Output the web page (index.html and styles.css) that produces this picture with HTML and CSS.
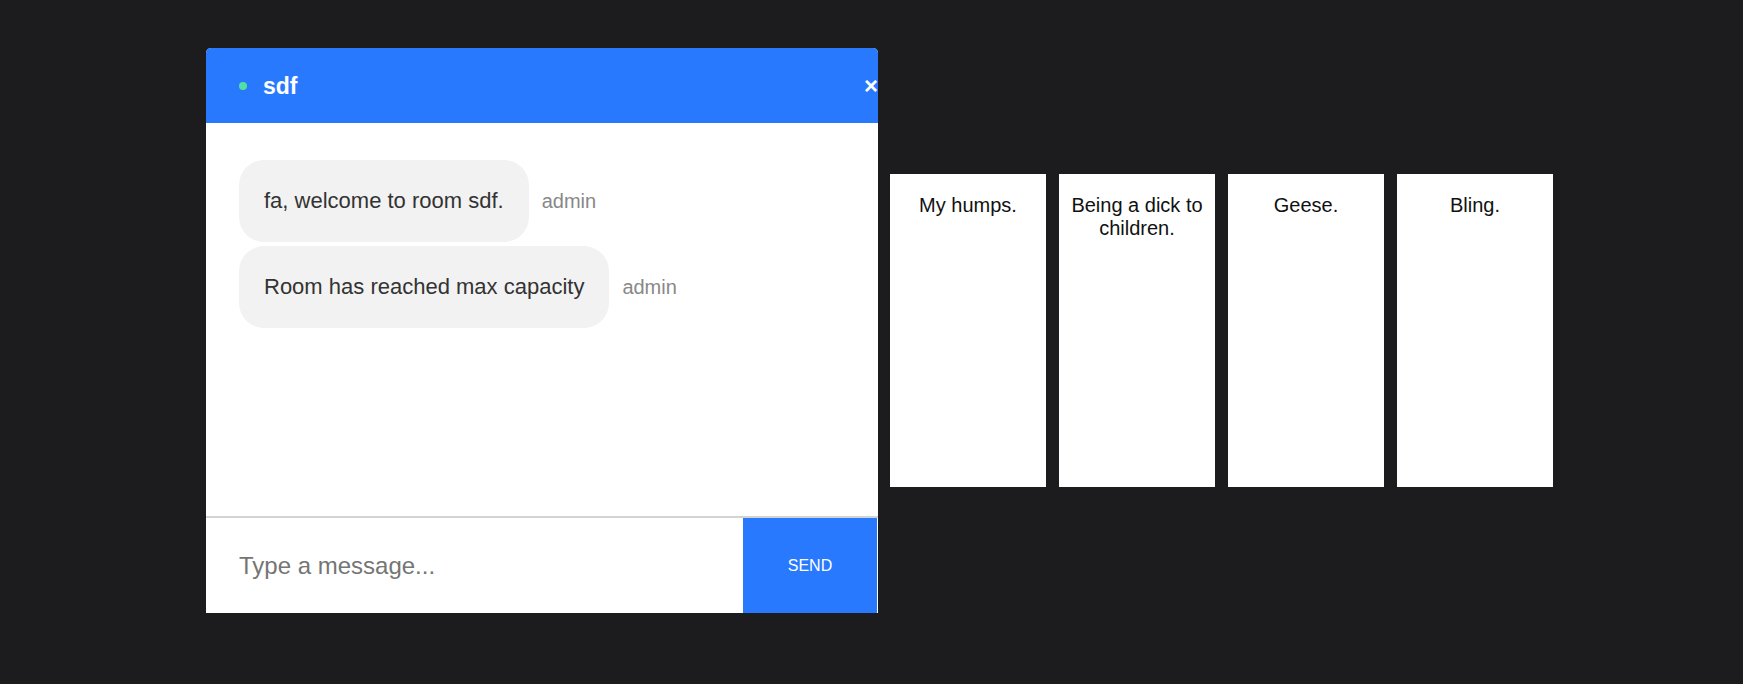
FILE: index.html
```html
<!DOCTYPE html>
<html lang="en">
<head>
<meta charset="utf-8">
<title>Chat room</title>
<link rel="stylesheet" href="styles.css">
</head>
<body>
<div class="stage">
  <section class="chat">
    <header class="chat-header">
      <span class="dot"></span>
      <span class="title">sdf</span>
      <span class="close">&times;</span>
    </header>
    <div class="messages">
      <div class="msg">
        <div class="bubble">fa, welcome to room sdf.</div>
        <span class="sender">admin</span>
      </div>
      <div class="msg">
        <div class="bubble">Room has reached max capacity</div>
        <span class="sender">admin</span>
      </div>
    </div>
    <form class="composer">
      <input class="composer-input" type="text" placeholder="Type a message...">
      <button class="send" type="button">Send</button>
    </form>
  </section>
  <div class="cards">
    <div class="card">My humps.</div>
    <div class="card">Being a dick to children.</div>
    <div class="card">Geese.</div>
    <div class="card">Bling.</div>
  </div>
</div>
</body>
</html>
```
FILE: styles.css
```css
* {
  box-sizing: border-box;
}

html, body {
  margin: 0;
  padding: 0;
}

body {
  background: #1c1c1e;
  font-family: "Liberation Sans", Arial, sans-serif;
  width: 1743px;
  height: 684px;
  overflow: hidden;
}

.stage {
  display: flex;
  align-items: center;
  gap: 12px;
  padding: 48px 0 0 206px;
}

.chat {
  width: 672px;
  height: 565px;
  background: #ffffff;
  border-radius: 5px 5px 0 0;
  overflow: hidden;
  display: flex;
  flex-direction: column;
  flex: none;
}

.chat-header {
  height: 75px;
  flex: none;
  background: #2979ff;
  display: flex;
  align-items: center;
  padding-left: 33px;
}

.dot {
  width: 8px;
  height: 8px;
  border-radius: 50%;
  background: #52e0a0;
  margin-right: 16px;
  flex: none;
}

.title {
  color: #ffffff;
  font-size: 23px;
  font-weight: bold;
  line-height: 26px;
}

.close {
  margin-left: auto;
  color: #ffffff;
  font-size: 24px;
  font-weight: bold;
  line-height: 26px;
}

.messages {
  flex: 1;
  display: flex;
  flex-direction: column;
  align-items: flex-start;
  gap: 4px;
  padding: 37px 0 0 33px;
}

.msg {
  display: flex;
  align-items: center;
}

.bubble {
  background: #f2f2f2;
  color: #333333;
  font-size: 22px;
  line-height: 26px;
  padding: 28px 25px;
  border-radius: 25px;
}

.sender {
  margin-left: 13px;
  font-size: 20px;
  color: #888888;
}

.composer {
  margin: 0;
  height: 97px;
  flex: none;
  border-top: 2px solid #d3d3d3;
  display: flex;
}

.composer-input {
  flex: 1;
  min-width: 0;
  border: none;
  outline: none;
  background: #ffffff;
  padding: 0 0 0 33px;
  font-family: "Liberation Sans", Arial, sans-serif;
  font-size: 24px;
  color: #333333;
}

.composer-input::placeholder {
  color: #757575;
}

.send {
  width: 134px;
  margin-right: 1px;
  border: none;
  background: #2979ff;
  color: #ffffff;
  font-family: "Liberation Sans", Arial, sans-serif;
  font-size: 16px;
  text-transform: uppercase;
  padding: 0;
}

.cards {
  display: flex;
  gap: 13px;
}

.card {
  width: 156px;
  height: 313px;
  background: #ffffff;
  color: #111111;
  font-size: 20px;
  line-height: 23px;
  text-align: center;
  padding: 20px 8px 0;
}
```
